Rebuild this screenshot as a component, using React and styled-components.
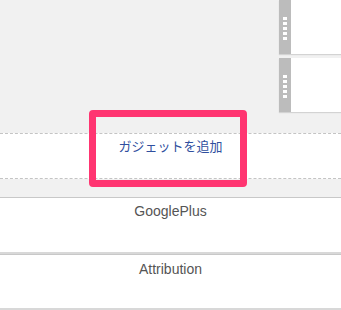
import React from 'react'
import styled, { createGlobalStyle } from 'styled-components'

const Global = createGlobalStyle`
  html, body {
    margin: 0;
    background: #f1f1f1;
  }
`

const Page = styled.div`
  position: relative;
  width: 341px;
  height: 310px;
  overflow: hidden;
  background: #f1f1f1;
  font-family: "Liberation Sans", "Noto Sans CJK JP", sans-serif;
`

const TopArea = styled.div`
  display: flex;
  justify-content: flex-end;
  height: 133px;
`

const Sidebar = styled.div`
  width: 62px;
  display: flex;
  flex-direction: column;
  gap: 4px;
`

const Widget = styled.div`
  display: flex;
  height: 54px;
  box-shadow: 0 1px 1px rgba(0, 0, 0, 0.12);
`

const Handle = styled.div`
  width: 12px;
  background: #bcbcbc;
  display: flex;
  flex-direction: column;
  align-items: center;
  gap: 2px;
  padding-top: 17px;
  box-sizing: border-box;
`

const Dot = styled.span`
  width: 4px;
  height: 3px;
  background: #fff;
`

const WidgetBody = styled.div`
  flex: 1;
  background: #fff;
`

const AddStrip = styled.div`
  height: 44px;
  background: #fff;
  border-top: 1px dashed #c4c4c4;
  border-bottom: 1px dashed #c4c4c4;
  text-align: center;
`

const AddLink = styled.a`
  display: inline-block;
  margin-top: 2px;
  font-family: "Noto Sans CJK JP", sans-serif;
  font-size: 13px;
  line-height: 20px;
  color: #2f4f9e;
  text-decoration: none;
`

const Spacer = styled.div`
  height: 18px;
`

const Panel = styled.div`
  height: ${p => p.$h}px;
  box-sizing: border-box;
  background: #fff;
  border-top: 1px solid #c8c8c8;
  border-bottom: 2px solid #d8d8d8;
  text-align: center;
  font-size: 14px;
  line-height: 18px;
  color: #555;
  padding-top: ${p => p.$pad}px;
`

const Highlight = styled.div`
  position: absolute;
  left: 89px;
  top: 110px;
  width: 158px;
  height: 77px;
  box-sizing: border-box;
  border: 7px solid #ff3571;
  border-radius: 4px;
  pointer-events: none;
`

const GadgetWidget = () => (
  <Widget>
    <Handle>
      {[0, 1, 2, 3, 4].map(i => (
        <Dot key={i} />
      ))}
    </Handle>
    <WidgetBody />
  </Widget>
)

const App = () => (
  <>
    <Global />
    <Page>
      <TopArea>
        <Sidebar>
          <GadgetWidget />
          <GadgetWidget />
        </Sidebar>
      </TopArea>
      <AddStrip>
        <AddLink href="#">ガジェットを追加</AddLink>
      </AddStrip>
      <Spacer />
      <Panel $h={57} $pad={4}>GooglePlus</Panel>
      <Panel $h={56} $pad={5}>Attribution</Panel>
      <Highlight />
    </Page>
  </>
)

export default App
